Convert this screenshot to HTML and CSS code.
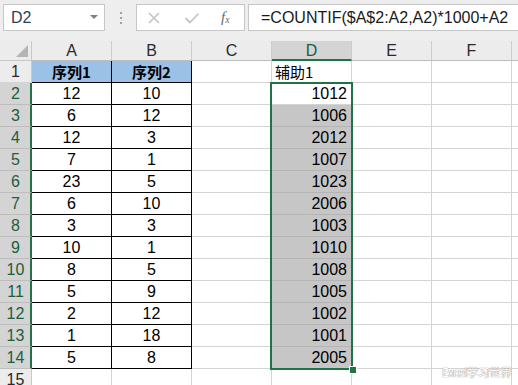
FILE: index.html
```html
<!DOCTYPE html>
<html lang="zh">
<head>
<meta charset="utf-8">
<title>Excel</title>
<link rel="stylesheet" href="styles.css">
</head>
<body>
<div class="app">
  <div class="toolbar">
    <div class="namebox"><span class="ref">D2</span><span class="caret"></span></div>
    <div class="grip"><i></i><i></i><i></i></div>
    <div class="fxbox">
      <svg class="ico" width="14" height="14" viewBox="0 0 14 14"><path d="M2 2 L12 12 M12 2 L2 12" stroke="#c4c4c4" stroke-width="1.6" fill="none"/></svg>
      <svg class="ico" width="16" height="14" viewBox="0 0 16 14"><path d="M1.5 7 L6 11.5 L14.5 2.5" stroke="#c4c4c4" stroke-width="1.8" fill="none"/></svg>
      <span class="fx">f<sub>x</sub></span>
    </div>
    <div class="formula">=COUNTIF($A$2:A2,A2)*1000+A2</div>
  </div>
  <div class="sheet">
    <div class="corner"><span class="tri"></span></div>
    <div class="ch">A</div><div class="ch">B</div><div class="ch">C</div><div class="ch sel">D</div><div class="ch">E</div><div class="ch">F</div><div class="ch last"></div>

    <div class="rh">1</div><div class="c t hd">序列1</div><div class="c t hd">序列2</div><div class="c"></div><div class="c cj">辅助1</div><div class="c"></div><div class="c"></div><div class="c last"></div>
    <div class="rh sel">2</div><div class="c t">12</div><div class="c t">10</div><div class="c"></div><div class="c n">1012</div><div class="c"></div><div class="c"></div><div class="c last"></div>
    <div class="rh sel">3</div><div class="c t">6</div><div class="c t">12</div><div class="c"></div><div class="c n s">1006</div><div class="c"></div><div class="c"></div><div class="c last"></div>
    <div class="rh sel">4</div><div class="c t">12</div><div class="c t">3</div><div class="c"></div><div class="c n s">2012</div><div class="c"></div><div class="c"></div><div class="c last"></div>
    <div class="rh sel">5</div><div class="c t">7</div><div class="c t">1</div><div class="c"></div><div class="c n s">1007</div><div class="c"></div><div class="c"></div><div class="c last"></div>
    <div class="rh sel">6</div><div class="c t">23</div><div class="c t">5</div><div class="c"></div><div class="c n s">1023</div><div class="c"></div><div class="c"></div><div class="c last"></div>
    <div class="rh sel">7</div><div class="c t">6</div><div class="c t">10</div><div class="c"></div><div class="c n s">2006</div><div class="c"></div><div class="c"></div><div class="c last"></div>
    <div class="rh sel">8</div><div class="c t">3</div><div class="c t">3</div><div class="c"></div><div class="c n s">1003</div><div class="c"></div><div class="c"></div><div class="c last"></div>
    <div class="rh sel">9</div><div class="c t">10</div><div class="c t">1</div><div class="c"></div><div class="c n s">1010</div><div class="c"></div><div class="c"></div><div class="c last"></div>
    <div class="rh sel">10</div><div class="c t">8</div><div class="c t">5</div><div class="c"></div><div class="c n s">1008</div><div class="c"></div><div class="c"></div><div class="c last"></div>
    <div class="rh sel">11</div><div class="c t">5</div><div class="c t">9</div><div class="c"></div><div class="c n s">1005</div><div class="c"></div><div class="c"></div><div class="c last"></div>
    <div class="rh sel">12</div><div class="c t">2</div><div class="c t">12</div><div class="c"></div><div class="c n s">1002</div><div class="c"></div><div class="c"></div><div class="c last"></div>
    <div class="rh sel">13</div><div class="c t">1</div><div class="c t">18</div><div class="c"></div><div class="c n s">1001</div><div class="c"></div><div class="c"></div><div class="c last"></div>
    <div class="rh sel">14</div><div class="c t">5</div><div class="c t">8</div><div class="c"></div><div class="c n s">2005</div><div class="c"></div><div class="c"></div><div class="c last"></div>
    <div class="rh">15</div><div class="c"></div><div class="c"></div><div class="c"></div><div class="c"></div><div class="c"></div><div class="c"></div><div class="c last"></div>

    <div class="selection"><span class="handle"></span></div>
    <div class="watermark">Excel学习世界</div>
  </div>
</div>
</body>
</html>
```
FILE: styles.css
```css
* { box-sizing: border-box; }
html, body { margin: 0; padding: 0; }
body {
  width: 518px;
  height: 385px;
  overflow: hidden;
  background: #ffffff;
  font-family: "Liberation Sans", Arial, "Noto Sans CJK SC", sans-serif;
}
.app { width: 518px; height: 385px; overflow: hidden; }

.toolbar {
  height: 41px;
  background: #eeeeee;
  display: flex;
  align-items: flex-start;
  padding-top: 4px;
  padding-left: 3px;
}
.namebox {
  width: 102px;
  height: 27px;
  background: #fff;
  border: 1px solid #c6c6c6;
  display: flex;
  align-items: center;
  justify-content: space-between;
  padding: 0 6px 0 7px;
  font-size: 16px;
  color: #2e3f55;
}
.caret {
  width: 0; height: 0;
  border-left: 4px solid transparent;
  border-right: 4px solid transparent;
  border-top: 4px solid #808080;
  margin-top: -2px;
}
.grip {
  width: 31px;
  height: 27px;
  display: flex;
  flex-direction: column;
  align-items: center;
  justify-content: center;
  gap: 3px;
}
.grip i { display: block; width: 2px; height: 2px; background: #a0a0a0; }
.fxbox {
  width: 109px;
  height: 27px;
  background: #fff;
  border: 1px solid #c6c6c6;
  display: flex;
  align-items: center;
  padding-left: 10px;
  gap: 0;
}
.fxbox .ico:first-child { margin-right: 23px; }
.fxbox .ico:nth-child(2) { margin-right: 21px; }
.fx {
  font-family: "Liberation Serif", "DejaVu Serif", serif;
  font-style: italic;
  font-size: 15px;
  color: #6a6a6a;
  line-height: 1;
}
.fx sub { font-size: 10px; vertical-align: -1px; }
.formula {
  margin-left: 3px;
  flex: 1;
  height: 27px;
  background: #fff;
  border: 1px solid #c6c6c6;
  border-right: none;
  font-size: 16px;
  line-height: 25px;
  padding-left: 12px;
  color: #1a1a1a;
  white-space: nowrap;
}

.sheet {
  position: relative;
  display: grid;
  grid-template-columns: 32px repeat(6, 80px) 6px;
  grid-template-rows: 20px repeat(15, 22px);
  background: #fff;
}
.corner {
  background: #ececec;
  border-right: 1px solid #c8c8c8;
  border-bottom: 1px solid #c8c8c8;
  position: relative;
}
.tri {
  position: absolute;
  right: 3px;
  bottom: 3px;
  width: 0; height: 0;
  border-left: 12px solid transparent;
  border-bottom: 12px solid #b5b5b5;
}
.ch {
  background: #ececec;
  border-right: 1px solid #cdcdcd;
  border-bottom: 1px solid #bdbdbd;
  text-align: center;
  font-size: 16px;
  line-height: 20px;
  color: #2a2a2a;
}
.ch.sel {
  background: #d4d4d4;
  border-bottom: 2px solid #217346;
  color: #1d5e3a;
}
.rh {
  background: #ececec;
  border-right: 1px solid #c8c8c8;
  border-bottom: 1px solid #d4d4d4;
  text-align: center;
  font-size: 16px;
  line-height: 21px;
  color: #2a2a2a;
}
.rh.sel {
  background: #d4d4d4;
  border-right: 2px solid #217346;
  border-bottom: 1px solid #bdbdbd;
  color: #1d5e3a;
  padding-left: 1px;
}
.c {
  border-right: 1px solid #d4d4d4;
  border-bottom: 1px solid #d4d4d4;
  font-size: 16px;
  line-height: 21px;
  color: #000;
  white-space: nowrap;
}
.c.last, .ch.last { border-right: none; }
.c.t {
  border-right: 1px solid #000;
  border-bottom: 1px solid #000;
  text-align: center;
}
.c.hd {
  background: #9bc2e6;
  font-family: "Noto Sans CJK SC", sans-serif;
  font-weight: 700;
  font-size: 15px;
  line-height: 21px;
}
.c.cj {
  font-family: "Noto Sans CJK SC", sans-serif;
  font-size: 15px;
  padding-left: 3px;
  line-height: 21px;
}
.c.n { text-align: right; padding-right: 4px; }
.c.s { background: #c6c6c6; border-bottom-color: #b4b4b4; }

.selection {
  position: absolute;
  left: 270px;
  top: 41px;
  width: 83px;
  height: 288px;
  border: 2px solid #217346;
  pointer-events: none;
}
.handle {
  position: absolute;
  right: -6px;
  bottom: -6px;
  width: 8px;
  height: 8px;
  background: #217346;
  border: 1px solid #fff;
}
.watermark {
  position: absolute;
  left: 442px;
  top: 323px;
  font-family: "Noto Sans CJK SC", sans-serif;
  font-size: 11.5px;
  line-height: 16px;
  color: #ffffff;
  letter-spacing: -0.4px;
  white-space: nowrap;
  text-shadow: 0 0 1px #8a8a8a, 0 0 1px #8a8a8a;
}
```
